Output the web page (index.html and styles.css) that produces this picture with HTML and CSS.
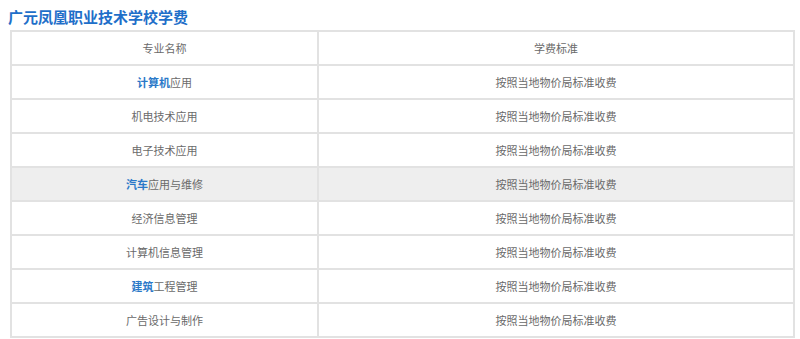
FILE: index.html
```html
<!DOCTYPE html>
<html lang="zh">
<head>
<meta charset="utf-8">
<link rel="stylesheet" href="styles.css">
</head>
<body>
<h2 class="title">广元凤凰职业技术学校学费</h2>
<table class="fees">
  <tr><td class="c1">专业名称</td><td>学费标准</td></tr>
  <tr><td class="c1"><b>计算机</b>应用</td><td>按照当地物价局标准收费</td></tr>
  <tr><td class="c1">机电技术应用</td><td>按照当地物价局标准收费</td></tr>
  <tr><td class="c1">电子技术应用</td><td>按照当地物价局标准收费</td></tr>
  <tr class="hl"><td class="c1"><b>汽车</b>应用与维修</td><td>按照当地物价局标准收费</td></tr>
  <tr><td class="c1">经济信息管理</td><td>按照当地物价局标准收费</td></tr>
  <tr><td class="c1">计算机信息管理</td><td>按照当地物价局标准收费</td></tr>
  <tr><td class="c1"><b>建筑</b>工程管理</td><td>按照当地物价局标准收费</td></tr>
  <tr><td class="c1">广告设计与制作</td><td>按照当地物价局标准收费</td></tr>
</table>
</body>
</html>
```
FILE: styles.css
```css
html, body {
  margin: 0;
  padding: 0;
  background: #fff;
}
body {
  padding: 0 5px 0 8px;
  font-family: "Noto Sans CJK SC", "Microsoft YaHei", sans-serif;
}
.title {
  margin: 0;
  padding-top: 6px;
  height: 24px;
  font-size: 15px;
  line-height: 22px;
  font-weight: bold;
  color: #1f6fc9;
}
.fees {
  margin-left: 2px;
  width: 785px;
  border-collapse: collapse;
  table-layout: fixed;
  border: 2px solid #e2e2e2;
}
.fees td {
  height: 32px;
  padding: 0;
  border: 2px solid #e2e2e2;
  text-align: center;
  vertical-align: middle;
  font-size: 11px;
  color: #6a6a6a;
}
.fees td.c1 {
  width: 305px;
}
.fees b {
  color: #2a78c8;
  font-weight: bold;
}
.fees tr.hl td {
  background: #eeeeee;
}
```
